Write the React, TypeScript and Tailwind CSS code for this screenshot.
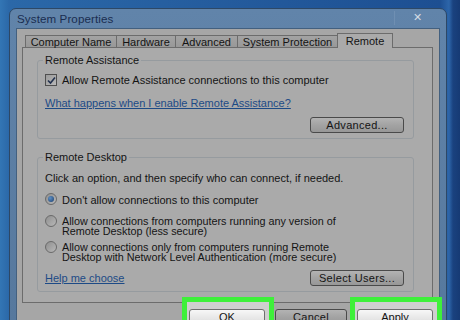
import React from "react";

const textCls = "text-[11px] leading-[12px] text-[#141414]";
const twoLineCls = "text-[10.8px] leading-[10px] text-[#141414]";

function Checkbox() {
  return (
    <span className="w-[12px] h-[12px] border border-[#4f4f4f] bg-[linear-gradient(135deg,#9a9a9a,#b9b9b9)] flex items-center justify-center shrink-0">
      <svg width="9" height="9" viewBox="0 0 9 9">
        <path d="M1 4.5 L3.5 7 L8 1.5" fill="none" stroke="#23324f" strokeWidth="1.6" />
      </svg>
    </span>
  );
}

function Radio({ checked }: { checked?: boolean }) {
  return (
    <span className="w-[12px] h-[12px] rounded-full border border-[#6a6a6a] bg-[linear-gradient(135deg,#8f8f8f,#b8b8b8)] flex items-center justify-center shrink-0 mt-[-1px]">
      {checked && (
        <span className="w-[6px] h-[6px] rounded-full bg-[radial-gradient(circle_at_35%_35%,#5d8fc4,#1c3f6e)]" />
      )}
    </span>
  );
}

function DimButton({ label, width }: { label: string; width: string }) {
  return (
    <button
      className={`${width} h-[16px] rounded-[3px] border border-[#4a4a4a] bg-[linear-gradient(#b3b3b3,#a3a3a3_50%,#979797)] text-[11px] leading-[12px] text-[#141414] tracking-[0.3px]`}
    >
      {label}
    </button>
  );
}

function HiButton({ label }: { label: string }) {
  return (
    <span className="relative flex">
      <span className="absolute -left-[7px] -right-[9px] -top-[12px] -bottom-[12px] border-[5px] border-[#3ef03a] bg-[#cfcfcf]" />
      <button className="relative w-[76px] h-[16px] rounded-[3px] border border-[#6f6f6f] bg-[linear-gradient(#f7f7f7,#e9e9e9_50%,#dcdcdc)] text-[11px] leading-[12px] text-[#141414]">
        {label}
      </button>
    </span>
  );
}

export default function App() {
  const tabs = [
    { name: "Computer Name", w: "w-[92px]" },
    { name: "Hardware", w: "w-[60px]" },
    { name: "Advanced", w: "w-[63px]" },
    { name: "System Protection", w: "w-[101px]" },
  ];

  return (
    <div className="w-[460px] h-[320px] overflow-hidden bg-[linear-gradient(90deg,#3376b5,#2b68a8_9px,#1d4f92_440px,#2d66aa_449px,#1a427f_453px,#163a74)] pt-[8px] pl-[9px] font-['Liberation_Sans',Arial,sans-serif]">
      <div className="w-[438px] h-[340px] rounded-t-[7px] border border-[#2d4866] bg-[linear-gradient(#6184aa,#55779c)] px-[6px]">
        {/* title bar */}
        <div className="h-[19px] flex items-center justify-between">
          <span className="pl-[1px] text-[11.6px] text-[#1a2d50] tracking-[0.1px]">System Properties</span>
          <span className="w-[46px] h-[14px] -mt-[2px] flex items-center justify-center border-l border-[#6f8fb2] text-[11px] leading-none text-[#d3dbe4]">
            ✕
          </span>
        </div>

        {/* dialog body */}
        <div className="h-[320px] border border-[#43607f] bg-[#a6a6a6] pl-[5px] pt-[4px]">
          {/* tabs */}
          <div className="flex items-end h-[14px] pl-[3px] relative z-10">
            {tabs.map((t) => (
              <div
                key={t.name}
                className={`${t.w} h-[12px] -mr-px border border-b-0 border-[#6c6c6c] bg-[linear-gradient(#a3a3a3,#989898)] text-[11px] leading-[12px] text-[#141414] text-center`}
              >
                {t.name}
              </div>
            ))}
            <div className="w-[56px] h-[15px] -mb-px border border-b-0 border-[#6c6c6c] bg-[#aaaaaa] text-[11px] leading-[12px] text-[#141414] text-center pt-[1px]">
              Remote
            </div>
          </div>

          {/* tab panel */}
          <div className="w-[411px] border border-[#6c6c6c] bg-[#aaaaaa] pl-[14px] pr-[18px] pt-[6px] pb-[10px]">
            <fieldset className="border border-[#969b9f] rounded-[3px] pl-[7px] pr-[9px] pb-[5px]">
              <legend className={`${textCls} px-[2px] -ml-[2px]`}>Remote Assistance</legend>
              <div className="flex items-center gap-[5px] mt-[8px]">
                <Checkbox />
                <span className={textCls}>Allow Remote Assistance connections to this computer</span>
              </div>
              <div className="mt-[11px] text-[11px] leading-[12px] text-[#1d4a86] underline">
                What happens when I enable Remote Assistance?
              </div>
              <div className="flex justify-end mt-[8px]">
                <DimButton label="Advanced..." width="w-[94px]" />
              </div>
            </fieldset>

            <fieldset className="border border-[#969b9f] rounded-[3px] pl-[7px] pr-[9px] pb-[5px] mt-[12px]">
              <legend className={`${textCls} px-[2px] -ml-[2px]`}>Remote Desktop</legend>
              <div className={`${textCls} mt-[9px]`}>
                Click an option, and then specify who can connect, if needed.
              </div>
              <div className="flex items-start gap-[5px] mt-[10px]">
                <Radio checked />
                <span className={textCls}>Don't allow connections to this computer</span>
              </div>
              <div className="flex items-start gap-[5px] mt-[10px]">
                <Radio />
                <span className={twoLineCls}>
                  Allow connections from computers running any version of
                  <br />
                  Remote Desktop (less secure)
                </span>
              </div>
              <div className="flex items-start gap-[5px] mt-[6px]">
                <Radio />
                <span className={twoLineCls}>
                  Allow connections only from computers running Remote
                  <br />
                  Desktop with Network Level Authentication (more secure)
                </span>
              </div>
              <div className="flex items-center justify-between mt-[8px]">
                <span className="text-[11px] leading-[12px] text-[#1d4a86] underline">Help me choose</span>
                <DimButton label="Select Users..." width="w-[94px]" />
              </div>
            </fieldset>
          </div>

          {/* bottom buttons */}
          <div className="flex justify-end gap-[10px] pr-[6px] mt-[6px]">
            <HiButton label="OK" />
            <DimButton label="Cancel" width="w-[72px]" />
            <HiButton label="Apply" />
          </div>
        </div>
      </div>
    </div>
  );
}
